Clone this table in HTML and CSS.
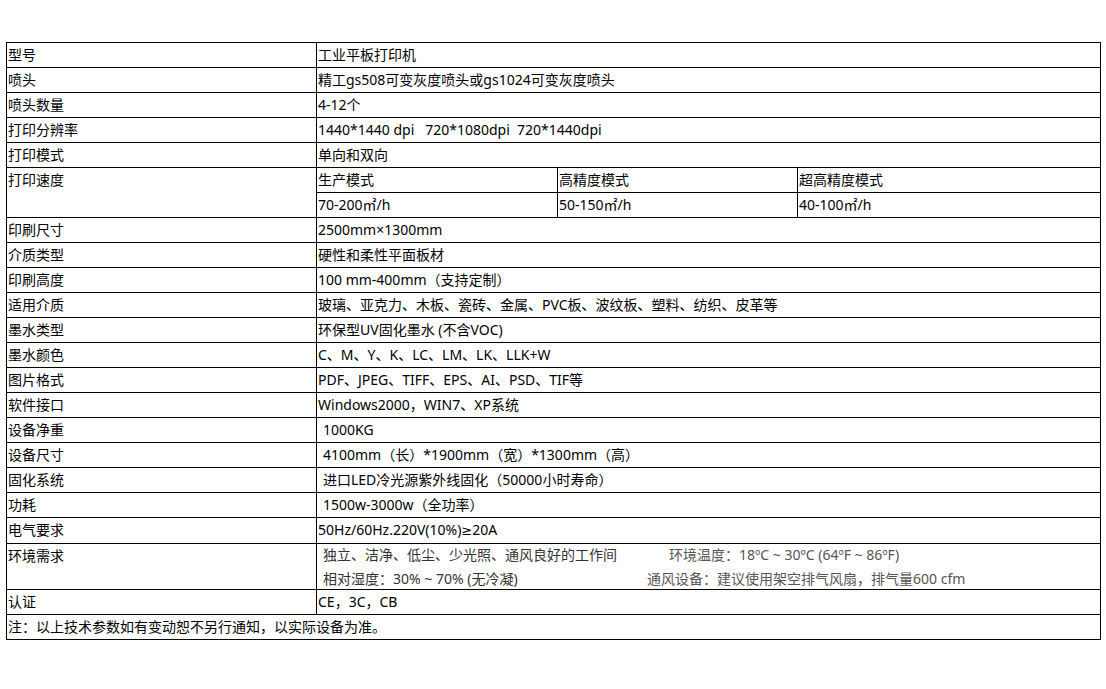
FILE: index.html
```html
<!DOCTYPE html>
<html lang="zh-CN">
<head>
<meta charset="utf-8">
<title>工业平板打印机参数</title>
<link rel="stylesheet" href="styles.css">
</head>
<body>
<div class="page">
<table class="spec">
<colgroup>
<col class="c1"><col class="c2"><col class="c3"><col class="c4">
</colgroup>
<tbody>
<tr><td>型号</td><td colspan="3">工业平板打印机</td></tr>
<tr><td>喷头</td><td colspan="3">精工gs508可变灰度喷头或gs1024可变灰度喷头</td></tr>
<tr><td>喷头数量</td><td colspan="3">4-12个</td></tr>
<tr><td>打印分辨率</td><td colspan="3">1440*1440 dpi&nbsp;&nbsp; 720*1080dpi&nbsp; 720*1440dpi</td></tr>
<tr><td>打印模式</td><td colspan="3">单向和双向</td></tr>
<tr><td rowspan="2">打印速度</td><td>生产模式</td><td>高精度模式</td><td>超高精度模式</td></tr>
<tr><td>70-200㎡/h</td><td>50-150㎡/h</td><td>40-100㎡/h</td></tr>
<tr><td>印刷尺寸</td><td colspan="3">2500mm×1300mm</td></tr>
<tr><td>介质类型</td><td colspan="3">硬性和柔性平面板材</td></tr>
<tr><td>印刷高度</td><td colspan="3">100 mm-400mm（支持定制）</td></tr>
<tr><td>适用介质</td><td colspan="3">玻璃、亚克力、木板、瓷砖、金属、PVC板、波纹板、塑料、纺织、皮革等</td></tr>
<tr><td>墨水类型</td><td colspan="3">环保型UV固化墨水 (不含VOC)</td></tr>
<tr><td>墨水颜色</td><td colspan="3">C、M、Y、K、LC、LM、LK、LLK+W</td></tr>
<tr><td>图片格式</td><td colspan="3">PDF、JPEG、TIFF、EPS、AI、PSD、TIF等</td></tr>
<tr><td>软件接口</td><td colspan="3">Windows2000，WIN7、XP系统</td></tr>
<tr><td>设备净重</td><td colspan="3" class="ind">1000KG</td></tr>
<tr><td>设备尺寸</td><td colspan="3" class="ind">4100mm（长）*1900mm（宽）*1300mm（高）</td></tr>
<tr><td>固化系统</td><td colspan="3" class="ind">进口LED冷光源紫外线固化（50000小时寿命）</td></tr>
<tr><td>功耗</td><td colspan="3" class="ind">1500w-3000w（全功率）</td></tr>
<tr><td>电气要求</td><td colspan="3">50Hz/60Hz.220V(10%)<span class="sym">≥</span>20A</td></tr>
<tr class="env"><td>环境需求</td><td colspan="3" class="ind envcell">
<div class="envlines">
<div class="envline"><span class="e1">独立、洁净、低尘、少光照、通风良好的工作间</span><span class="e2">环境温度：18ºC ~ 30ºC (64ºF ~ 86ºF)</span></div>
<div class="envline"><span class="e3">相对湿度：30% ~ 70% (无冷凝)</span><span class="e2">通风设备：建议使用架空排气风扇，排气量600 cfm</span></div>
</div>
</td></tr>
<tr><td>认证</td><td colspan="3">CE，3C，CB</td></tr>
<tr><td colspan="4">注：以上技术参数如有变动恕不另行通知，以实际设备为准。</td></tr>
</tbody>
</table>
</div>
</body>
</html>
```

FILE: styles.css
```css
html, body {
  margin: 0;
  padding: 0;
  background: #ffffff;
}
.page {
  padding: 42px 0 0 6px;
}
.spec {
  border-collapse: collapse;
  table-layout: fixed;
  width: 1094px;
  font-family: "Noto Sans", "Noto Sans CJK SC", sans-serif;
  font-size: 14px;
  color: #000;
}
.c1 { width: 310px; }
.c2 { width: 241px; }
.c3 { width: 240px; }
.c4 { width: 303px; }
.spec td {
  border: 1px solid #000;
  padding: 0 1px;
  height: 24px;
  line-height: 24px;
  vertical-align: top;
  white-space: nowrap;
  overflow: hidden;
}
.spec td.ind {
  padding-left: 6px;
}
.sym {
  font-family: "DejaVu Sans", sans-serif;
  font-size: 13px;
}
.spec .env td {
  height: 45px;
}
.envcell {
  color: #333;
}
.envlines {
  display: flex;
  flex-direction: column;
  gap: 3px;
}
.envline {
  display: flex;
  line-height: 21px;
}
.e1 {
  width: 346px;
  flex: none;
}
.e3 {
  width: 324px;
  flex: none;
}
.e2 {
  color: #555;
}
```
